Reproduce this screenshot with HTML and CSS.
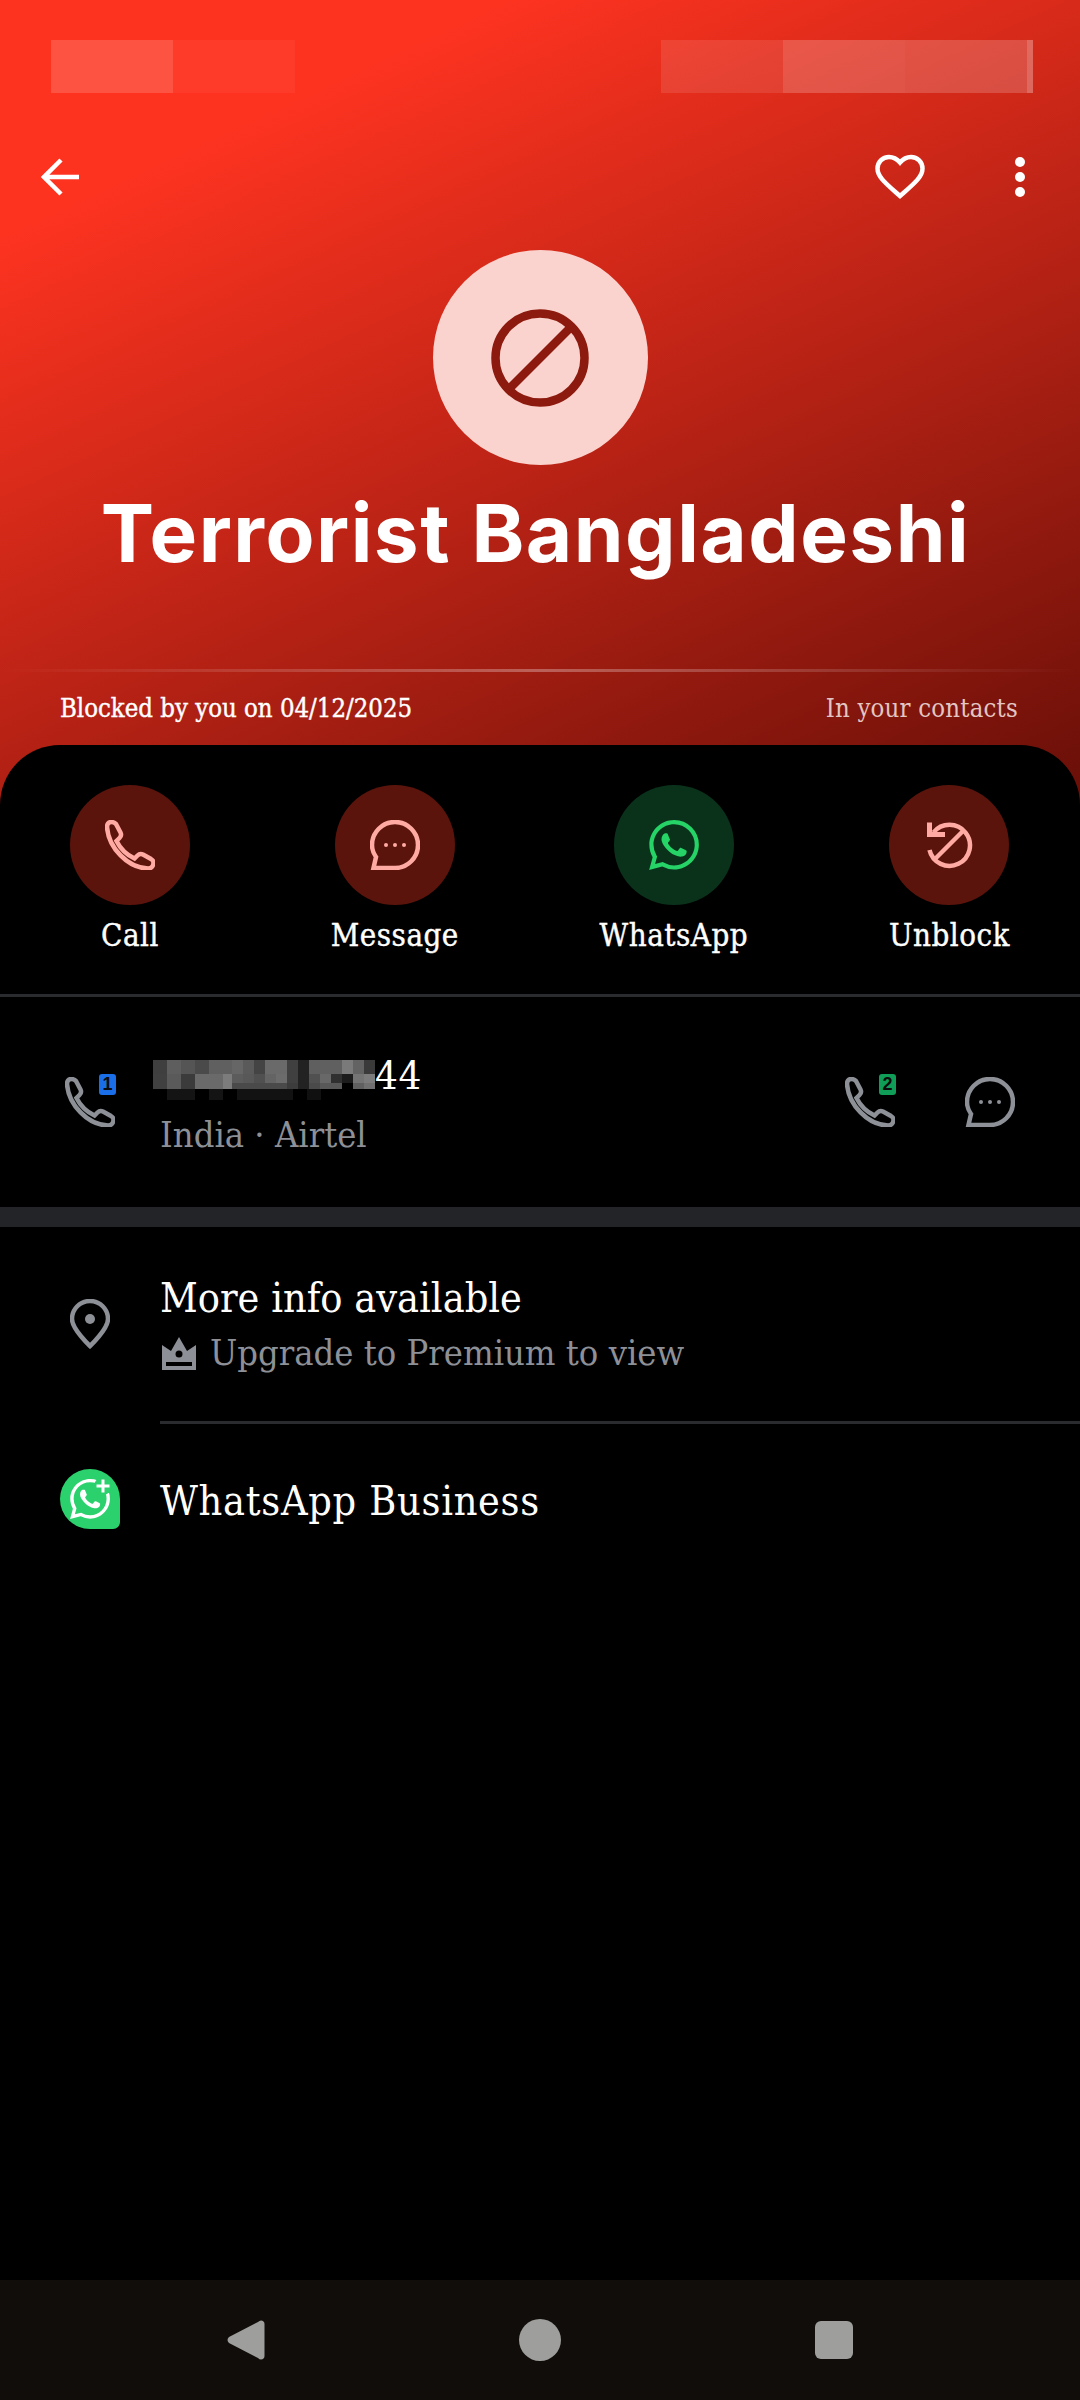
FILE: index.html
```html
<!DOCTYPE html>
<html lang="en">
<head>
<meta charset="utf-8">
<title>Terrorist Bangladeshi</title>
<link rel="stylesheet" href="styles.css">
</head>
<body>
<div class="page">
  <header class="hero">
    <div class="status">
      <div class="status-group"><i class="sb sb-a"></i><i class="sb sb-b"></i></div>
      <div class="status-group"><i class="sb sb-c"></i><i class="sb sb-d"></i><i class="sb sb-e"></i><i class="sb sb-f"></i></div>
    </div>
    <nav class="topbar">
      <svg class="ic-back" viewBox="0 0 40 40"><path d="M38 20H4M20 3 3 20l17 17" fill="none" stroke="#fff" stroke-width="4.5"/></svg>
      <div class="top-actions">
        <svg class="ic-heart" viewBox="0 0 50 45"><path d="M25 42l-4-3.500C9 28 2.500 22 2.500 14.500 2.500 8 7.500 3 14 3c4 0 8 2 11 5.500C28 5 32 3 36 3c6.500 0 11.500 5 11.500 11.500C47.500 22 41 28 29 38.500z" fill="none" stroke="#fff" stroke-width="4.500"/></svg>
        <svg class="ic-dots" viewBox="0 0 10 40"><circle cx="5" cy="5" r="5" fill="#fff"/><circle cx="5" cy="20" r="5" fill="#fff"/><circle cx="5" cy="35" r="5" fill="#fff"/></svg>
      </div>
    </nav>
    <div class="avatar">
      <svg class="ic-block" viewBox="0 0 98 98"><circle cx="49" cy="49" r="44.500" fill="none" stroke="#8c1a0e" stroke-width="8.500"/><path d="M20 78 78 20" stroke="#8c1a0e" stroke-width="8.500"/></svg>
    </div>
    <h1 class="name">Terrorist Bangladeshi</h1>
    <div class="rule"></div>
    <div class="meta"><span class="meta-a">Blocked by you on 04/12/2025</span><span class="meta-b">In your contacts</span></div>
  </header>

  <main class="sheet">
    <section class="actions">
      <div class="action">
        <div class="disc disc-red"><svg class="ic50" viewBox="0 0 50 50"><path class="st-pink" d="M6 2C3.500 2 2 4 2 7c1.500 21 21 41 41 41.500 3.500 0 5.500-2.500 5.500-6 0-1.500-1-2.500-2.500-3.500l-8-4.500c-2-1-4-.5-5.500 1l-3 3C22 35 15 28 11.500 21l3-3c1.500-1.500 2-3.500 1-5.500L11 4C10 2.800 8 2 6 2z"/></svg></div>
        <span class="action-label">Call</span>
      </div>
      <div class="action">
        <div class="disc disc-red"><svg class="ic50" viewBox="0 0 50 50"><path class="st-pink" d="M25 2c12.700 0 23 10.300 23 23S37.700 48 25 48H3.500l2.500-11C3.500 33.500 2 29.500 2 25 2 12.300 12.300 2 25 2z"/><circle class="fl-pink" cx="16" cy="25" r="2"/><circle class="fl-pink" cx="25" cy="25" r="2"/><circle class="fl-pink" cx="34" cy="25" r="2"/></svg></div>
        <span class="action-label">Message</span>
      </div>
      <div class="action">
        <div class="disc disc-green"><svg class="ic50" viewBox="0 0 24 24"><path fill="#25d366" d="M17.472 14.382c-.297-.149-1.758-.867-2.030-.967-.273-.099-.471-.148-.670.150-.197.297-.767.966-.940 1.164-.173.199-.347.223-.644.075-.297-.150-1.255-.463-2.390-1.475-.883-.788-1.480-1.761-1.653-2.059-.173-.297-.018-.458.130-.606.134-.133.298-.347.446-.520.149-.174.198-.298.298-.497.099-.198.050-.371-.025-.520-.075-.149-.669-1.612-.916-2.207-.242-.579-.487-.500-.669-.510-.173-.008-.371-.010-.570-.010-.198 0-.520.074-.792.372-.272.297-1.040 1.016-1.040 2.479 0 1.462 1.065 2.875 1.213 3.074.149.198 2.096 3.200 5.077 4.487.709.306 1.262.489 1.694.625.712.227 1.360.195 1.871.118.571-.085 1.758-.719 2.006-1.413.248-.694.248-1.289.173-1.413-.074-.124-.272-.198-.570-.347m-5.421 7.403h-.004a9.870 9.870 0 01-5.031-1.378l-.361-.214-3.741.982.998-3.648-.235-.374a9.860 9.860 0 01-1.510-5.260c.001-5.450 4.436-9.884 9.888-9.884 2.640 0 5.122 1.030 6.988 2.898a9.825 9.825 0 012.893 6.994c-.003 5.450-4.437 9.884-9.885 9.884m8.413-18.297A11.815 11.815 0 0012.050 0C5.495 0 .160 5.335.157 11.892c0 2.096.547 4.142 1.588 5.945L.057 24l6.305-1.654a11.882 11.882 0 005.683 1.448h.005c6.554 0 11.890-5.335 11.893-11.893a11.821 11.821 0 00-3.480-8.413z"/></svg></div>
        <span class="action-label">WhatsApp</span>
      </div>
      <div class="action">
        <div class="disc disc-red"><svg class="ic50" viewBox="0 0 50 50"><path class="st-pink" d="M9.500 12.500A20.500 20.500 0 1 1 5.500 30"/><path class="st-pink" d="M39 11 11 39"/><path class="fl-pink" d="M3 2.500l5 0 0 9.500 13 0 0 5-18 0z"/></svg></div>
        <span class="action-label">Unblock</span>
      </div>
    </section>

    <section class="number-row">
      <div class="call-slot">
        <svg class="ic50" viewBox="0 0 50 50"><path class="st-grey" d="M6 2C3.500 2 2 4 2 7c1.500 21 21 41 41 41.500 3.500 0 5.500-2.500 5.500-6 0-1.500-1-2.500-2.500-3.500l-8-4.500c-2-1-4-.5-5.500 1l-3 3C22 35 15 28 11.500 21l3-3c1.500-1.500 2-3.500 1-5.500L11 4C10 2.800 8 2 6 2z"/></svg>
        <span class="sim sim-blue">1</span>
      </div>
      <div class="number-text">
        <div class="number-line">
          <svg class="mosaic" viewBox="0 0 222 40" shape-rendering="crispEdges">
            <rect x="0" y="0" width="14" height="14" fill="#3f3f3f"/><rect x="14" y="0" width="14" height="14" fill="#5e5e5e"/><rect x="28" y="0" width="14" height="14" fill="#555"/><rect x="42" y="0" width="14" height="14" fill="#4a4a4a"/><rect x="56" y="0" width="23" height="14" fill="#606060"/><rect x="79" y="0" width="11" height="14" fill="#666"/><rect x="90" y="0" width="11" height="14" fill="#5a5a5a"/><rect x="101" y="0" width="11" height="14" fill="#444"/><rect x="112" y="0" width="22" height="14" fill="#6a6a6a"/><rect x="134" y="0" width="11" height="14" fill="#404040"/><rect x="145" y="0" width="11" height="14" fill="#222"/><rect x="156" y="0" width="11" height="14" fill="#5f5f5f"/><rect x="167" y="0" width="22" height="14" fill="#606060"/><rect x="189" y="0" width="11" height="14" fill="#7a7a7a"/><rect x="200" y="0" width="11" height="14" fill="#636363"/><rect x="211" y="0" width="11" height="14" fill="#3a3a3a"/>
            <rect x="0" y="14" width="14" height="15" fill="#404040"/><rect x="14" y="14" width="14" height="15" fill="#5a5a5a"/><rect x="28" y="14" width="14" height="15" fill="#3b3b3b"/><rect x="42" y="14" width="28" height="15" fill="#6a6a6a"/><rect x="70" y="14" width="9" height="15" fill="#7c7c7c"/>
            <rect x="79" y="14" width="11" height="9" fill="#5c5c5c"/><rect x="90" y="14" width="11" height="9" fill="#585858"/><rect x="101" y="14" width="11" height="9" fill="#505050"/><rect x="112" y="14" width="11" height="9" fill="#646464"/><rect x="123" y="14" width="11" height="9" fill="#6c6c6c"/><rect x="134" y="14" width="11" height="9" fill="#404040"/><rect x="145" y="14" width="11" height="15" fill="#222"/><rect x="156" y="14" width="11" height="9" fill="#505050"/><rect x="167" y="14" width="11" height="9" fill="#686868"/><rect x="178" y="14" width="11" height="9" fill="#303030"/><rect x="189" y="14" width="11" height="9" fill="#1c1c1c"/><rect x="200" y="14" width="11" height="9" fill="#747474"/><rect x="211" y="14" width="11" height="9" fill="#7c7c7c"/>
            <rect x="79" y="23" width="55" height="6" fill="#4a4a4a"/><rect x="134" y="23" width="11" height="6" fill="#3c3c3c"/><rect x="156" y="23" width="11" height="6" fill="#4a4a4a"/><rect x="167" y="23" width="22" height="6" fill="#585858"/><rect x="200" y="23" width="11" height="6" fill="#606060"/><rect x="211" y="23" width="11" height="6" fill="#707070"/>
            <rect x="14" y="29" width="28" height="11" fill="#141414"/><rect x="56" y="29" width="14" height="11" fill="#141414"/><rect x="84" y="29" width="56" height="11" fill="#121212"/><rect x="154" y="29" width="14" height="11" fill="#101010"/>
          </svg>
          <span class="digits">44</span>
        </div>
        <div class="sub carrier">India · Airtel</div>
      </div>
      <div class="row-end">
        <div class="call-slot">
          <svg class="ic50" viewBox="0 0 50 50"><path class="st-grey" d="M6 2C3.500 2 2 4 2 7c1.500 21 21 41 41 41.500 3.500 0 5.500-2.500 5.500-6 0-1.500-1-2.500-2.500-3.500l-8-4.500c-2-1-4-.5-5.500 1l-3 3C22 35 15 28 11.500 21l3-3c1.500-1.500 2-3.500 1-5.500L11 4C10 2.800 8 2 6 2z"/></svg>
          <span class="sim sim-green">2</span>
        </div>
        <svg class="ic50" viewBox="0 0 50 50"><path class="st-grey" d="M25 2c12.700 0 23 10.300 23 23S37.700 48 25 48H3.500l2.500-11C3.500 33.500 2 29.500 2 25 2 12.300 12.300 2 25 2z"/><circle class="fl-grey" cx="16" cy="25" r="2"/><circle class="fl-grey" cx="25" cy="25" r="2"/><circle class="fl-grey" cx="34" cy="25" r="2"/></svg>
      </div>
    </section>

    <div class="band"></div>

    <section class="info-row">
      <div class="info-icon">
        <svg class="ic-pin" viewBox="0 0 40 50"><path class="st-grey" d="M20 47C20 47 2 30 2 20a18 18 0 0 1 36 0C38 30 20 47 20 47z"/><circle class="fl-grey" cx="20" cy="20" r="5"/></svg>
      </div>
      <div class="info-text">
        <div class="title">More info available</div>
        <div class="premium">
          <svg class="ic-crown" viewBox="0 0 34 33"><path class="fl-grey" d="M0 8l9 6 8-14 8 14 9-6v25H0z"/><circle cx="17" cy="17" r="3.500" fill="#000"/><rect x="4" y="25" width="26" height="4" fill="#000"/></svg>
          <span class="sub">Upgrade to Premium to view</span>
        </div>
      </div>
    </section>
    <div class="inset-rule"></div>
    <section class="info-row info-row-wa">
      <div class="info-icon">
        <div class="wa-biz">
          <svg class="ic-wa" viewBox="0 0 24 24"><path fill="#fff" d="M17.472 14.382c-.297-.149-1.758-.867-2.030-.967-.273-.099-.471-.148-.670.150-.197.297-.767.966-.940 1.164-.173.199-.347.223-.644.075-.297-.150-1.255-.463-2.390-1.475-.883-.788-1.480-1.761-1.653-2.059-.173-.297-.018-.458.130-.606.134-.133.298-.347.446-.520.149-.174.198-.298.298-.497.099-.198.050-.371-.025-.520-.075-.149-.669-1.612-.916-2.207-.242-.579-.487-.500-.669-.510-.173-.008-.371-.010-.570-.010-.198 0-.520.074-.792.372-.272.297-1.040 1.016-1.040 2.479 0 1.462 1.065 2.875 1.213 3.074.149.198 2.096 3.200 5.077 4.487.709.306 1.262.489 1.694.625.712.227 1.360.195 1.871.118.571-.085 1.758-.719 2.006-1.413.248-.694.248-1.289.173-1.413-.074-.124-.272-.198-.570-.347m-5.421 7.403h-.004a9.870 9.870 0 01-5.031-1.378l-.361-.214-3.741.982.998-3.648-.235-.374a9.860 9.860 0 01-1.510-5.260c.001-5.450 4.436-9.884 9.888-9.884 2.640 0 5.122 1.030 6.988 2.898a9.825 9.825 0 012.893 6.994c-.003 5.450-4.437 9.884-9.885 9.884m8.413-18.297A11.815 11.815 0 0012.050 0C5.495 0 .160 5.335.157 11.892c0 2.096.547 4.142 1.588 5.945L.057 24l6.305-1.654a11.882 11.882 0 005.683 1.448h.005c6.554 0 11.890-5.335 11.893-11.893a11.821 11.821 0 00-3.480-8.413z"/></svg>
          <svg class="ic-plus" viewBox="0 0 18 18"><circle cx="9" cy="9" r="9" fill="#2bd16c"/><path d="M9 2.500v13M2.500 9h13" stroke="#fff" stroke-width="3"/></svg>
        </div>
      </div>
      <div class="info-text info-text-wa"><div class="title title-wa">WhatsApp Business</div></div>
    </section>
  </main>

  <footer class="navbar">
    <svg class="ic-nav" viewBox="0 0 38 42"><path d="M34 1.500c2 0 3.500 1.500 3.500 3.500v32c0 2-1.500 3.500-3.500 3.500-1 0-2-.5-3-1.500L2 24c-2-2-2-4 0-6L31 3c1-1 2-1.500 3-1.500z" fill="#9e9e9c"/></svg>
    <span class="nav-home"></span>
    <span class="nav-square"></span>
  </footer>
</div>
</body>
</html>
```

FILE: styles.css
```css
* { box-sizing: border-box; }
html, body { margin: 0; padding: 0; background: #000; }
body { font-family: "DejaVu Serif", "Liberation Serif", serif; color: #fff; }
.page { width: 1080px; height: 2400px; display: flex; flex-direction: column; overflow: hidden; }

.hero {
  height: 805px;
  flex: none;
  background: linear-gradient(155deg, #fd3320 0%, #fd3320 18%, #680f08 100%);
  display: flex;
  flex-direction: column;
}
.status { display: flex; justify-content: space-between; padding: 40px 47px 0 51px; height: 93px; }
.status-group { display: flex; }
.sb { display: block; width: 122px; height: 53px; }
.sb-a { background: rgba(255,255,255,.16); }
.sb-b { background: rgba(255,255,255,.04); }
.sb-c { background: rgba(255,255,255,.1); }
.sb-d { background: rgba(255,255,255,.2); }
.sb-e { background: rgba(255,255,255,.18); }
.sb-f { background: rgba(255,255,255,.3); width: 6px; }

.topbar { display: flex; justify-content: space-between; align-items: center; padding: 61px 55px 0 41px; }
.ic-back { width: 40px; height: 40px; }
.top-actions { display: flex; align-items: center; gap: 90px; }
.ic-heart { width: 50px; height: 45px; }
.ic-dots { width: 10px; height: 40px; }

.avatar {
  width: 215px; height: 215px; border-radius: 50%;
  background: #fbd3ce;
  align-self: center;
  margin-top: 51px;
  display: flex; align-items: center; justify-content: center;
}
.ic-block { width: 98px; height: 98px; }

.name {
  margin: 18px 0 0;
  padding-right: 9px;
  font-family: Inter, "Open Sans", sans-serif;
  font-weight: 700;
  font-size: 80px;
  letter-spacing: 1.5px;
  line-height: 100px;
  text-align: center;
  color: #fff;
  white-space: nowrap;
}
.rule {
  height: 3px; margin-top: 86px;
  background: linear-gradient(90deg, rgba(255,255,255,0), rgba(255,255,255,.3) 50%, rgba(255,255,255,0));
}
.meta { display: flex; justify-content: space-between; align-items: baseline; padding: 19px 62px 0 60px; font-size: 25.5px; line-height: 34px; font-stretch: condensed; }
.meta-a { color: #fff; -webkit-text-stroke: .4px #fff; }
.meta-b { color: #e3c6c3; letter-spacing: .2px; }

.sheet { flex: 1; margin-top: -60px; background: #000; border-radius: 60px 60px 0 0; display: flex; flex-direction: column; position: relative; }

.actions { display: flex; justify-content: space-between; padding: 40px 70px 0; height: 252px; flex: none; border-bottom: 3px solid #2a2b2e; }
.action { display: flex; flex-direction: column; align-items: center; }
.disc { width: 120px; height: 120px; border-radius: 50%; display: flex; align-items: center; justify-content: center; }
.disc-red { background: #5a140c; }
.disc-green { background: #0a321b; }
.ic50 { width: 50px; height: 50px; display: block; }
.st-pink { fill: none; stroke: #ffaba3; stroke-width: 4.5; }
.fl-pink { fill: #ffaba3; }
.st-grey { fill: none; stroke: #8d9096; stroke-width: 4.5; }
.fl-grey { fill: #8d9096; }
.action-label { font-size: 31px; letter-spacing: .5px; line-height: 40px; margin-top: 10px; white-space: nowrap; font-stretch: condensed; -webkit-text-stroke: .4px #fff; }

.number-row { height: 210px; flex: none; display: flex; align-items: center; padding: 0 65px; }
.call-slot { position: relative; width: 50px; height: 50px; flex: none; }
.sim { position: absolute; top: -3px; right: -1px; width: 17px; height: 21px; border-radius: 3px; font-family: "Liberation Sans", sans-serif; font-size: 18px; font-weight: 700; line-height: 21px; text-align: center; color: #0b0b0b; }
.sim-blue { background: #1a6fe8; }
.sim-green { background: #0f9d58; }
.number-text { flex: 1; margin-left: 38px; padding-top: 8px; }
.number-line { display: flex; align-items: flex-start; height: 50px; }
.mosaic { width: 222px; height: 40px; flex: none; margin-top: 5px; }
.digits { font-size: 40px; line-height: 40px; letter-spacing: .5px; font-stretch: condensed; }
.sub { color: #8d9096; font-size: 36px; line-height: 44px; font-stretch: condensed; }
.carrier { margin-left: 7px; margin-top: 8px; }
.row-end { display: flex; align-items: center; gap: 70px; }

.band { height: 20px; flex: none; background: #232428; }

.info-row { height: 194px; flex: none; display: flex; align-items: center; }
.info-row-wa { height: 149px; }
.info-icon { width: 160px; flex: none; display: flex; justify-content: center; padding-left: 20px; }
.ic-pin { width: 40px; height: 50px; }
.title { font-size: 41px; line-height: 50px; font-stretch: condensed; color: #fff; white-space: nowrap; }
.title-wa { letter-spacing: .7px; }
.info-text-wa { padding-top: 4px; }
.premium { display: flex; align-items: center; margin-top: 8px; }
.ic-crown { width: 34px; height: 33px; margin-left: 2px; margin-right: 14px; flex: none; }
.inset-rule { height: 3px; flex: none; margin-left: 160px; background: #2a2b2e; }

.wa-biz { position: relative; width: 60px; height: 60px; border-radius: 50% 50% 7px 50%; background: #2bd16c; display: flex; align-items: center; justify-content: center; }
.ic-wa { width: 40px; height: 40px; }
.ic-plus { position: absolute; top: 8px; right: 8px; width: 18px; height: 18px; }

.navbar { height: 120px; flex: none; background: #110d0b; display: flex; align-items: center; justify-content: center; position: relative; gap: 254px; }
.ic-nav { width: 38px; height: 42px; }
.nav-home { width: 42px; height: 42px; border-radius: 50%; background: #9e9e9c; }
.nav-square { width: 38px; height: 38px; border-radius: 6px; background: #9e9e9c; }
```
